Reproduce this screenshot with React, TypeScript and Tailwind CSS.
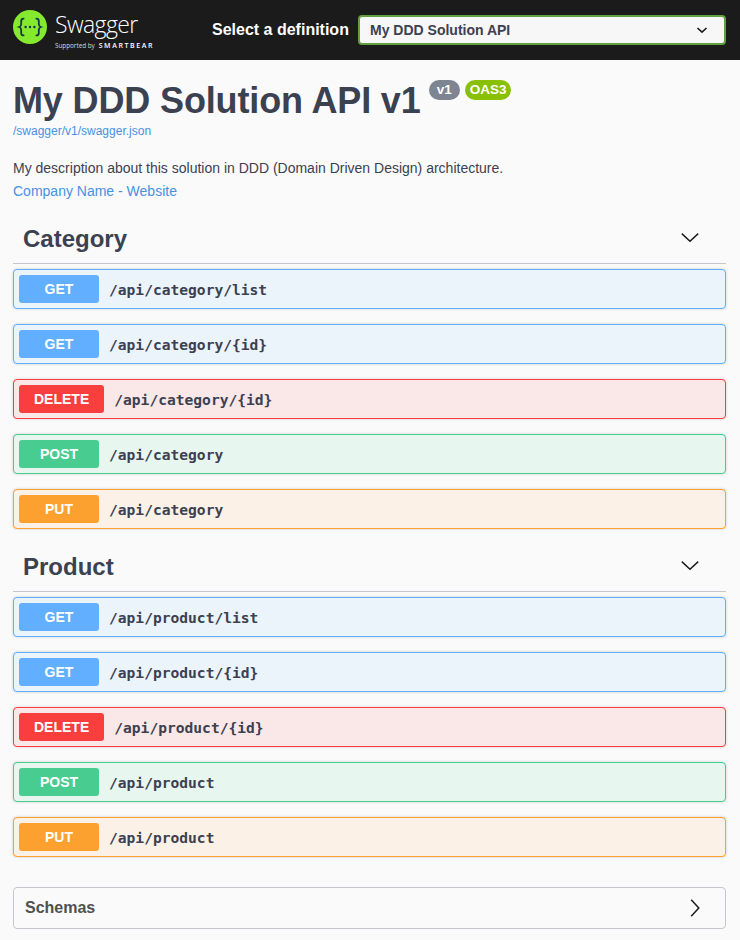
const sans = "font-['Liberation_Sans',Arial,sans-serif]";

const styles = {
  GET: { row: "bg-[#ebf3fb] border-[#61affe]", badge: "bg-[#61affe] min-w-[80px]" },
  DELETE: { row: "bg-[#fae7e7] border-[#f93e3e]", badge: "bg-[#f93e3e] px-[15px]" },
  POST: { row: "bg-[#e8f6f0] border-[#49cc90]", badge: "bg-[#49cc90] min-w-[80px]" },
  PUT: { row: "bg-[#fbf1e6] border-[#fca130]", badge: "bg-[#fca130] min-w-[80px]" },
};

type Method = keyof typeof styles;

function Chevron({ dir }: { dir: "down" | "right" }) {
  return dir === "down" ? (
    <svg width="20" height="20" viewBox="0 0 20 20" className="text-[#1b1b1b]">
      <path fill="none" stroke="currentColor" strokeWidth="1.5" d="M1.8 5.6 10 13.2l8.2-7.6" />
    </svg>
  ) : (
    <svg width="20" height="20" viewBox="0 0 20 20" className="text-[#1b1b1b]">
      <path fill="none" stroke="currentColor" strokeWidth="1.5" d="M6.2 1.8 13.8 10l-7.6 8.2" />
    </svg>
  );
}

function Logo() {
  return (
    <svg width="34" height="34" viewBox="0 0 34 34" className="shrink-0">
      <circle cx="17" cy="17" r="17" fill="#85ea2d" />
      <g fill="none" stroke="#173647" strokeWidth="1.8" strokeLinecap="round">
        <path d="M10.6 8.6c-1.8 0-2.4 1-2.4 2.5v2.8c0 1.6-.6 2.6-2 3.1 1.4.5 2 1.5 2 3.1v2.8c0 1.5.6 2.5 2.4 2.5" />
        <path d="M23.4 8.6c1.8 0 2.4 1 2.4 2.5v2.8c0 1.6.6 2.6 2 3.1-1.4.5-2 1.5-2 3.1v2.8c0 1.5-.6 2.5-2.4 2.5" />
      </g>
      <g fill="#173647">
        <circle cx="12.6" cy="17" r="1.2" />
        <circle cx="17" cy="17" r="1.2" />
        <circle cx="21.4" cy="17" r="1.2" />
      </g>
    </svg>
  );
}

function Row({ method, path }: { method: Method; path: string }) {
  const s = styles[method];
  return (
    <div className={`mb-[15px] flex h-10 items-center rounded border px-[5px] shadow-[0_0_3px_rgba(0,0,0,0.19)] ${s.row}`}>
      <span className={`flex h-7 items-center justify-center rounded-[3px] text-sm font-bold text-white ${s.badge}`}>
        {method}
      </span>
      <span className="pl-[10px] pt-px font-['DejaVu_Sans_Mono',monospace] text-[14.6px] font-bold text-[#3b4151]">
        {path}
      </span>
    </div>
  );
}

function Section({ title, rows }: { title: string; rows: [Method, string][] }) {
  return (
    <section>
      <div className="mb-[5px] flex h-[48px] items-center justify-between border-b border-[#c4c6cb] pl-[10px] pr-[26px]">
        <h3 className="-mt-[2px] text-2xl font-bold text-[#3b4151]">{title}</h3>
        <div className="-mt-[3px]">
          <Chevron dir="down" />
        </div>
      </div>
      {rows.map(([m, p], i) => (
        <Row key={i} method={m} path={p} />
      ))}
    </section>
  );
}

function res(name: string): [Method, string][] {
  return [
    ["GET", `/api/${name}/list`],
    ["GET", `/api/${name}/{id}`],
    ["DELETE", `/api/${name}/{id}`],
    ["POST", `/api/${name}`],
    ["PUT", `/api/${name}`],
  ];
}

export default function App() {
  return (
    <div className={`h-[940px] overflow-hidden bg-[#fafafa] ${sans}`}>
      <header className="flex h-[60px] items-center bg-[#1b1b1b] pl-[13px] pr-[14px]">
        <div className="flex h-[60px] w-[199px] shrink-0 items-start gap-2 pt-[10px]">
          <Logo />
          <div className="flex flex-col pt-[1px] text-white">
            <span className="h-[22px] font-['Open_Sans',sans-serif] text-[23px] font-light leading-[26px] tracking-[-0.6px]">Swagger</span>
            <span className="mt-[8px] flex h-[9px] items-center gap-[4px] whitespace-nowrap leading-[9px]">
              <span className="font-['Open_Sans',sans-serif] text-[6.3px] leading-[9px] text-[#d8d8d8]">Supported by</span>
              <span className="font-['Open_Sans',sans-serif] text-[7px] font-semibold leading-[9px] tracking-[1.6px]">SMARTBEAR</span>
            </span>
          </div>
        </div>
        <span className="w-[146px] shrink-0 text-base font-bold text-white">Select a definition</span>
        <div className="flex h-[30px] flex-1 items-center justify-between rounded-[4px] border-2 border-[#62a03f] bg-[#f7f7f7] pl-[10px] pr-[15px] text-sm font-bold text-[#3b4151]">
          <span>My DDD Solution API</span>
          <svg width="14" height="14" viewBox="0 0 14 14" className="text-[#1b1b1b]">
            <path fill="none" stroke="currentColor" strokeWidth="1.6" d="M2.5 5 7 9.2 11.5 5" />
          </svg>
        </div>
      </header>

      <main className="pl-[13px] pr-[14px]">
        <div className="flex items-start pt-[21px]">
          <h1 className="text-4xl font-bold leading-[40px] tracking-[-0.14px] text-[#3b4151]">My DDD Solution API v1</h1>
          <span className="ml-[8px] mt-[-1px] flex h-5 items-center rounded-full bg-[#7d8492] px-[8px] text-[13.5px] font-bold text-white">v1</span>
          <span className="ml-[5px] mt-[-1px] flex h-5 items-center rounded-full bg-[#89bf04] px-[5px] text-[13.5px] font-bold text-white">OAS3</span>
        </div>
        <a className="mt-[4px] block text-xs leading-[12px] text-[#4990e2]">/swagger/v1/swagger.json</a>
        <p className="mt-[20px] text-sm leading-[23px] text-[#3b4151]">
          My description about this solution in DDD (Domain Driven Design) architecture.
        </p>
        <a className="block text-sm leading-[23px] text-[#4990e2]">Company Name - Website</a>

        <div className="mt-[13px]">
          <Section title="Category" rows={res("category")} />
          <Section title="Product" rows={res("product")} />
        </div>

        <div className="mt-[30px] flex h-[42px] items-center justify-between rounded border border-[#c4c6cb] pl-[11px] pr-[20px] text-base font-bold text-[#505050]">
          <span>Schemas</span>
          <Chevron dir="right" />
        </div>
      </main>
    </div>
  );
}
